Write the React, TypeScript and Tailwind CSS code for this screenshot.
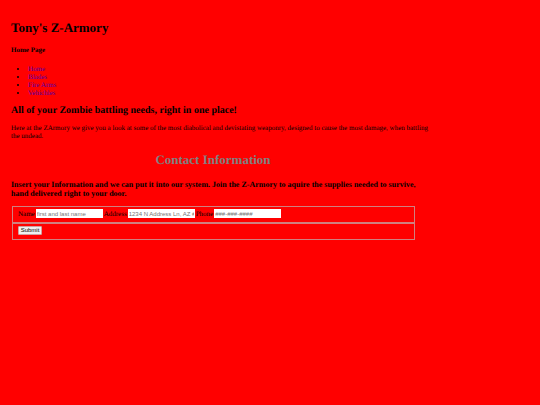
import React from "react";

const links = ["Home", "Blades", "Fire Arms", "Vehichles"];

const fields = [
  { id: "name", label: "Name", placeholder: "first and last name" },
  { id: "address", label: "Address", placeholder: "1234 N Address Ln, AZ ####" },
  { id: "phone", label: "Phone", placeholder: "###-###-####" },
];

export default function App() {
  return (
    <div className="min-h-screen bg-[#ff0000] px-[11px] pt-5 font-['Liberation_Serif',serif] text-[7px] leading-[8px] text-black [text-rendering:geometricPrecision]">
      <main className="w-4/5 max-w-[404px]">
        <h1 className="text-[13px] leading-4 font-bold">Tony's Z-Armory</h1>
        <h4 className="mt-[10px] font-bold">Home Page</h4>
        <nav className="mt-[11px]">
          <ul className="list-disc pl-[17px]">
            {links.map((label) => (
              <li key={label}>
                <a href="#" className="text-[#5500aa]">
                  {label}
                </a>
              </li>
            ))}
          </ul>
        </nav>
        <h2 className="mt-2 text-[10px] leading-3 font-bold">
          All of your Zombie battling needs, right in one place!
        </h2>
        <p className="mt-[7px] whitespace-nowrap">
          Here at the ZArmory we give you a look at some of the most diabolical and devistating weaponry, designed to cause the most damage, when battling
          <br />
          the undead.
        </p>
        <h1 className="mt-3 text-center text-[13px] leading-4 font-bold text-[#808080]">
          Contact Information
        </h1>
        <h3 className="mt-3 text-[8px] leading-[9px] font-bold whitespace-nowrap">
          Insert your Information and we can put it into our system. Join the Z-Armory to aquire the supplies needed to survive,
          <br />
          hand delivered right to your door.
        </h3>
        <form className="mt-2 ml-px" onSubmit={(e) => e.preventDefault()}>
          <fieldset className="flex h-[17px] items-start gap-px border border-[#d08080] px-[5px] pt-0.5">
            {fields.map((f) => (
              <React.Fragment key={f.id}>
                <label htmlFor={f.id} className="pt-px">{f.label}</label>
                <input
                  id={f.id}
                  type="text"
                  placeholder={f.placeholder}
                  className="h-[9px] w-[67px] bg-white px-px font-['Liberation_Sans',sans-serif] text-[6px] leading-[8px] placeholder:text-[#757575]"
                />
              </React.Fragment>
            ))}
          </fieldset>
          <fieldset className="flex h-[17px] items-start border border-[#d08080] px-[5px] pt-0.5">
            <button
              type="submit"
              className="h-[9px] w-6 rounded-[1px] border border-[#d0a0a0] bg-[#efefef] text-center font-['Liberation_Sans',sans-serif] text-[6px] leading-[7px]"
            >
              Submit
            </button>
          </fieldset>
        </form>
      </main>
    </div>
  );
}
